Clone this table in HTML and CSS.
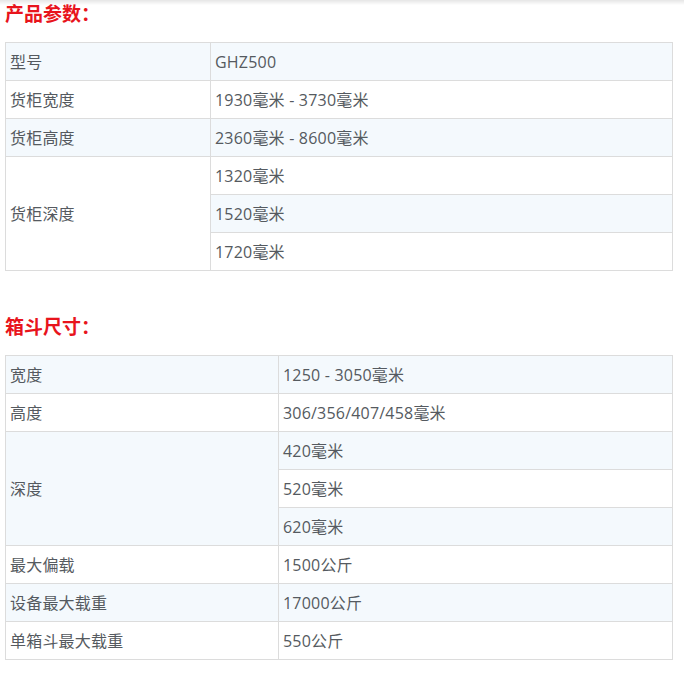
FILE: index.html
```html
<!DOCTYPE html>
<html lang="zh">
<head>
<meta charset="utf-8">
<link rel="stylesheet" href="styles.css">
</head>
<body>
<div class="topshade"></div>
<div class="page">
  <h3 class="title">产品参数：</h3>
  <table class="spec spec-a">
    <tr><td class="k">型号</td><td>GHZ500</td></tr>
    <tr><td class="k">货柜宽度</td><td>1930毫米 - 3730毫米</td></tr>
    <tr><td class="k">货柜高度</td><td>2360毫米 - 8600毫米</td></tr>
    <tr><td class="k" rowspan="3">货柜深度</td><td>1320毫米</td></tr>
    <tr><td>1520毫米</td></tr>
    <tr><td>1720毫米</td></tr>
  </table>
  <h3 class="title title-b">箱斗尺寸：</h3>
  <table class="spec spec-b">
    <tr><td class="k">宽度</td><td>1250 - 3050毫米</td></tr>
    <tr><td class="k">高度</td><td>306/356/407/458毫米</td></tr>
    <tr><td class="k" rowspan="3">深度</td><td>420毫米</td></tr>
    <tr><td>520毫米</td></tr>
    <tr><td>620毫米</td></tr>
    <tr><td class="k">最大偏载</td><td>1500公斤</td></tr>
    <tr><td class="k">设备最大载重</td><td>17000公斤</td></tr>
    <tr><td class="k">单箱斗最大载重</td><td>550公斤</td></tr>
  </table>
</div>
</body>
</html>
```
FILE: styles.css
```css
html, body {
  margin: 0;
  padding: 0;
  background: #fff;
}
body {
  font-family: "Open Sans", "Noto Sans CJK SC", sans-serif;
  color: #555;
}
.topshade {
  position: fixed;
  top: 0;
  left: 0;
  right: 0;
  height: 5px;
  background: linear-gradient(to bottom, rgba(0,0,0,0.10), rgba(0,0,0,0));
  pointer-events: none;
}
.page {
  padding: 0 11px 0 5px;
}
.title {
  margin: 0;
  height: 42px;
  padding-top: 1px;
  box-sizing: border-box;
  font-family: "Noto Sans CJK SC", sans-serif;
  font-size: 19px;
  line-height: 24px;
  font-weight: bold;
  color: #e8141c;
}
.title-b {
  margin-top: 42px;
}
.spec {
  width: 668px;
  border-collapse: collapse;
  font-size: 16px;
  letter-spacing: 0.2px;
}
.spec td {
  border: 1px solid #dcdcdc;
  height: 38px;
  box-sizing: border-box;
  padding: 0 4px;
  line-height: 20px;
  vertical-align: middle;
  background: #fff;
  color: #555a60;
  font-family: "Open Sans", "Noto Sans CJK SC", sans-serif;
}
.spec tr:nth-child(odd) td {
  background: #f4f9fd;
}
.spec tr:nth-child(even) td {
  background: #fff;
}
.spec-a td.k { width: 205px; }
.spec-b td.k { width: 273px; }
```
